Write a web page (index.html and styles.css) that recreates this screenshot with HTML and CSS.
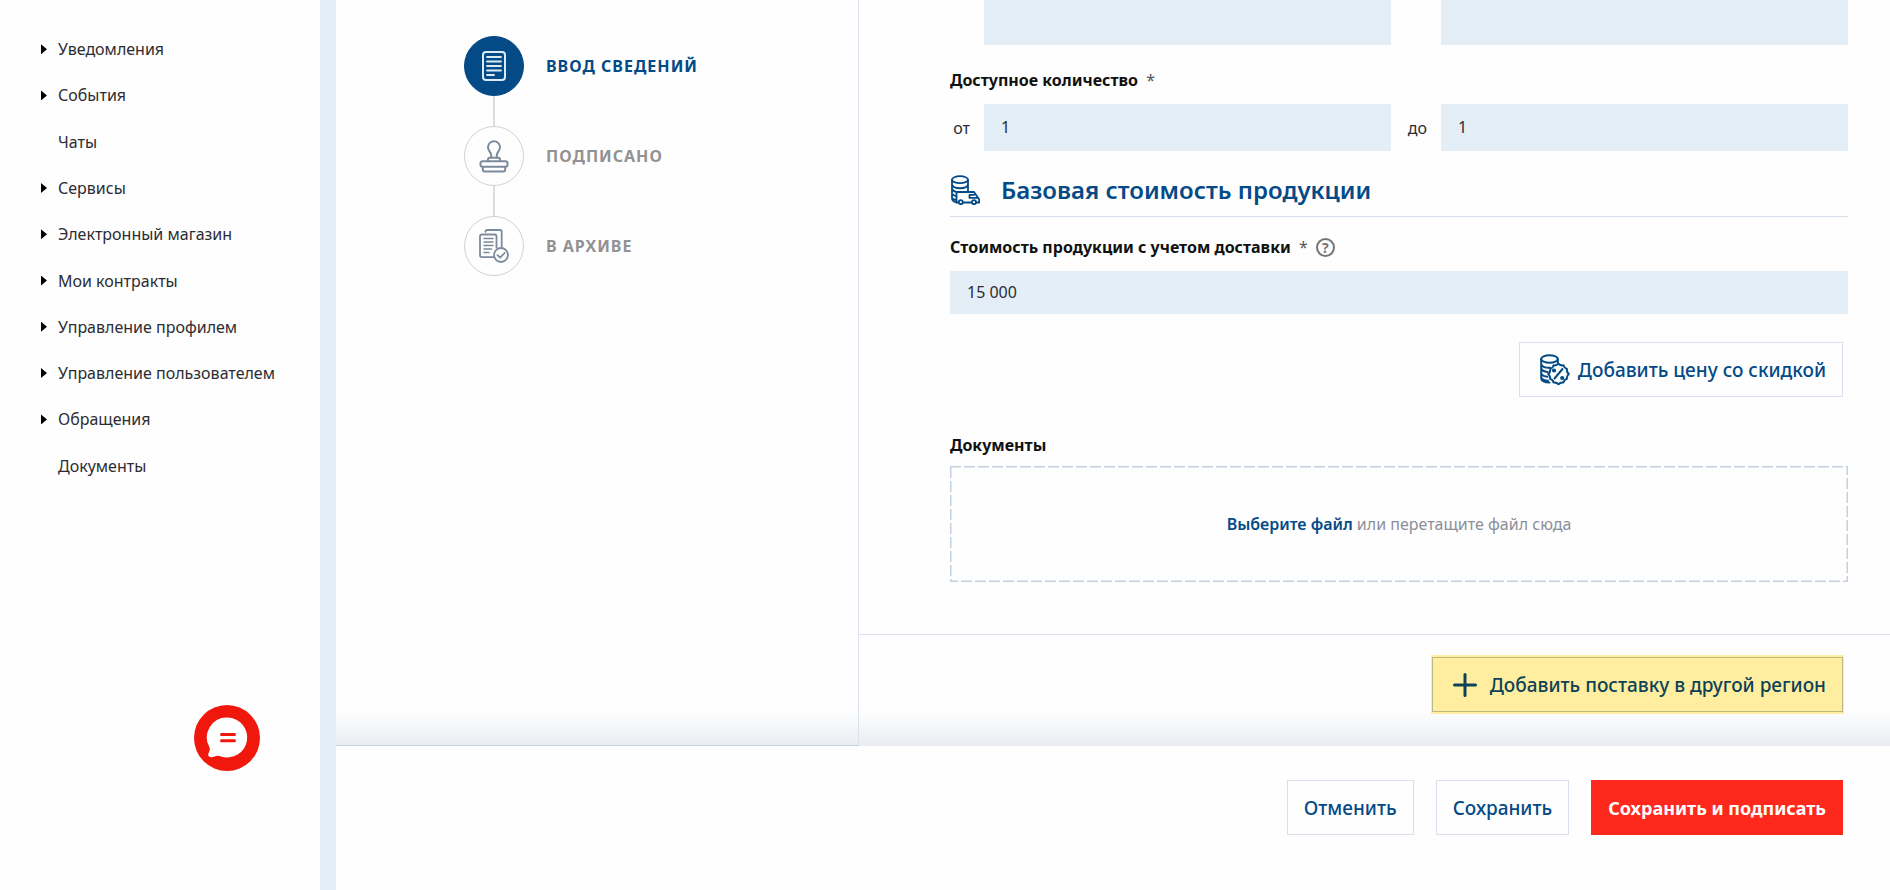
FILE: index.html
```html
<!DOCTYPE html>
<html lang="ru">
<head>
<meta charset="utf-8">
<meta name="viewport" content="width=device-width, initial-scale=1">
<title>Базовая стоимость продукции</title>
<link rel="stylesheet" href="styles.css">
</head>
<body>
<div class="page">
  <nav class="sidebar" aria-label="Меню">
    <ul class="menu">
      <li class="menu-item has-children"><a href="#">Уведомления</a></li>
      <li class="menu-item has-children"><a href="#">События</a></li>
      <li class="menu-item"><a href="#">Чаты</a></li>
      <li class="menu-item has-children"><a href="#">Сервисы</a></li>
      <li class="menu-item has-children"><a href="#">Электронный магазин</a></li>
      <li class="menu-item has-children"><a href="#">Мои контракты</a></li>
      <li class="menu-item has-children"><a href="#">Управление профилем</a></li>
      <li class="menu-item has-children"><a href="#">Управление пользователем</a></li>
      <li class="menu-item has-children"><a href="#">Обращения</a></li>
      <li class="menu-item"><a href="#">Документы</a></li>
    </ul>
  </nav>

  <main class="main">
    <div class="work">
      <section class="steps-panel">
        <ol class="steps">
          <li class="step step-active">
            <span class="step-icon">
              <svg width="24" height="30" viewBox="0 0 24 30" fill="none" stroke="#dcebf8" stroke-width="2" stroke-linecap="round">
                <rect x="1" y="1" width="22" height="28" rx="3"/>
                <path d="M5 6h14M5 10.500h14M5 15h14M5 19.500h14M5 24h7" stroke-width="1.800"/>
              </svg>
            </span>
            <span class="step-name">ВВОД СВЕДЕНИЙ</span>
          </li>
          <li class="step">
            <span class="step-icon">
              <svg width="30" height="34" viewBox="0 0 30 34" fill="none" stroke="#7c8b9b" stroke-width="2" stroke-linejoin="round" stroke-linecap="round">
                <path d="M12 18.500c1-3.200-.3-4.700-1.600-6.400a6 6 0 1 1 9.200 0c-1.300 1.700-2.600 3.200-1.600 6.400"/>
                <path d="M9 22v-1.500q0-1.800 1.800-1.800h8.400q1.800 0 1.800 1.800v1.500"/>
                <rect x="1.500" y="22.200" width="27" height="5.600" rx="2"/>
                <path d="M3.800 28v2.500q0 2 2 2h18.400q2 0 2-2v-2.500"/>
              </svg>
            </span>
            <span class="step-name">ПОДПИСАНО</span>
          </li>
          <li class="step">
            <span class="step-icon">
              <svg width="30" height="34" viewBox="0 0 30 34" fill="none" stroke="#7c8b9b" stroke-width="1.800" stroke-linejoin="round" stroke-linecap="round">
                <path d="M6.500 2.800V2.400Q6.500 1 8 1h13q1.700 0 1.700 1.700v15"/>
                <path d="M14.500 28.200H3q-2 0-2-2V7.500q0-2 2-2h12.500q2 0 2 2v11.200"/>
                <path d="M5 9.500h9M5 13h9M5 16.500h9M5 20h7.500M5 23.500h5" stroke-width="1.600"/>
                <circle cx="22" cy="26" r="7"/>
                <path d="M18.500 26.200l2.600 2.500 4.500-4.700"/>
              </svg>
            </span>
            <span class="step-name">В АРХИВЕ</span>
          </li>
        </ol>
      </section>

      <section class="form-panel">
        <form class="form" id="offer">
          <div class="range range-top">
            <span class="range-label"></span>
            <input class="field field-clipped" type="text" aria-label="Срок от">
            <span class="range-label"></span>
            <input class="field field-clipped" type="text" aria-label="Срок до">
          </div>

          <div class="label">Доступное количество <span class="required">*</span></div>
          <div class="range">
            <label class="range-label" for="qty-from">от</label>
            <input class="field" id="qty-from" type="text" value="1">
            <label class="range-label" for="qty-to">до</label>
            <input class="field" id="qty-to" type="text" value="1">
          </div>

          <h2 class="heading">
            <svg width="30" height="30" viewBox="0 0 30 30" fill="none" stroke="#044a86" stroke-width="1.800" stroke-linejoin="round" stroke-linecap="round">
              <ellipse cx="10" cy="4.700" rx="8" ry="3.500"/>
              <path d="M2 4.700v18.500q0 3 4.300 4.300M18 4.700v11M2 9.500c1 5 15 5 16 0M2 14c.8 1.600 2.300 2.400 4.300 2.800M2 18.700c.8 1.400 2 2 4.300 2.500M2 23c.8 1 2 1.600 4.300 2"/>
              <path d="M8.500 27.500h-2V17h17.500l4.200 6 1 1.500v3h-3M13 27.500h9M24 19.800h-4.500v3h7.500"/>
              <circle cx="10.800" cy="27.200" r="2"/><circle cx="24" cy="27.200" r="2"/>
            </svg>
            <span>Базовая стоимость продукции</span>
          </h2>

          <div class="label-row">
            <label class="label" for="price">Стоимость продукции с учетом доставки <span class="required">*</span></label>
            <button class="help" type="button" aria-label="Подсказка">?</button>
          </div>
          <input class="field field-price" id="price" type="text" value="15 000">

          <div class="actions">
            <button class="btn btn-discount" type="button">
              <svg width="30" height="32" viewBox="0 0 30 32" fill="none" stroke="#044a86" stroke-width="2" stroke-linejoin="round" stroke-linecap="round">
                <ellipse cx="9.500" cy="5" rx="8.300" ry="3.800"/>
                <path d="M1.200 5v19.500c.6 2.800 4 4 8.300 4M17.800 5v4M1.200 10c1 3 5 4 8.800 3.800M1.200 14.800c1 2 3.600 3 6.300 3.200M1.200 19.600c1 2 3.600 3 6.300 3.200M1.200 24c1 2 4 2.600 6.800 2.800"/>
                <path d="M18.500 9.700q2.200 2.300 5 1.600.8 2.900 3.400 3.600-.5 2.900 1.900 5-2.300 2-1.900 5-2.700.7-3.500 3.600-2.900-.6-4.900 1.800-2-2.400-4.900-1.800-.8-2.900-3.500-3.600.5-3-1.800-5 2.400-2.100 1.900-5 2.600-.7 3.400-3.600 2.800.7 4.900-1.600z"/>
                <path d="M22.500 15l-8 9.500"/>
                <circle cx="14" cy="16.500" r="1.100" fill="#044a86"/><circle cx="22.200" cy="24" r="1.100" fill="#044a86"/>
              </svg>
              <span>Добавить цену со скидкой</span>
            </button>
          </div>

          <div class="label">Документы</div>
          <div class="dropzone">
            <svg class="dropzone-frame" aria-hidden="true"><rect x="0" y="0" width="100%" height="100%"/></svg>
            <p><a class="pick" href="#">Выберите файл</a> или перетащите файл сюда</p>
          </div>
        </form>

        <div class="region-row">
          <button class="btn btn-region" type="button">
            <svg width="24" height="24" viewBox="0 0 24 24" stroke="#0d4257" stroke-width="3" stroke-linecap="round"><path d="M12 1.500v21M1.500 12h21"/></svg>
            <span>Добавить поставку в другой регион</span>
          </button>
        </div>
      </section>
    </div>

    <footer class="footer">
      <button class="btn" type="button">Отменить</button>
      <button class="btn" type="button">Сохранить</button>
      <button class="btn btn-primary" type="submit" form="offer">Сохранить и подписать</button>
    </footer>
  </main>
</div>

<button class="chat" type="button" aria-label="Открыть чат">
  <svg width="66" height="66" viewBox="0 0 66 66">
    <circle cx="33" cy="33" r="33" fill="#f0180d"/>
    <path d="M33.500 12.500a20 20 0 1 1-6.500 39c-2-.9-4.300-.9-6.500.1-3 1-6.500.8-6.300-1.800.2-2.500 2.500-4.500 1.300-7.300A20 20 0 0 1 33.500 12.500z" fill="#fff"/>
    <path d="M27.500 29.500h13M27.500 35.800h13" stroke="#f0180d" stroke-width="3" stroke-linecap="round"/>
  </svg>
</button>
</body>
</html>
```
FILE: styles.css
```css
* {
  box-sizing: border-box;
}

body {
  margin: 0;
  background: #fefefe;
  color: #2c2c33;
  font: 16px/24px "Noto Sans", "Open Sans", sans-serif;
}

button,
input {
  font: inherit;
  color: inherit;
}

.page {
  display: flex;
  min-height: 100vh;
}

/* Sidebar */
.sidebar {
  flex: 0 0 336px;
  border-right: 16px solid #e4eef7;
  padding: 26px 16px 24px 41px;
}

.menu {
  display: grid;
  grid-auto-rows: 1fr;
  min-height: 52vh;
  margin: 0;
  padding: 0;
  list-style: none;
}

.menu-item {
  display: flex;
  align-items: center;
  padding-left: 17px;
}

.has-children {
  padding-left: 0;
}

.has-children::before {
  content: "";
  width: 6px;
  height: 10px;
  margin-right: 11px;
  background: #000;
  clip-path: polygon(0 0, 100% 50%, 0 100%);
}

.menu-item a {
  color: inherit;
  text-decoration: none;
}

/* Work area */
.main {
  flex: 1;
  display: flex;
  flex-direction: column;
  min-width: 0;
}

.work {
  flex: 1;
  display: flex;
  background: linear-gradient(to top, #e9edf2, #fefefe 36px);
}

.steps-panel {
  flex: 0 0 523px;
  border-right: 1px solid #dbe2ee;
  border-bottom: 1px solid #c6d1e0;
  padding: 36px 24px 24px 128px;
}

.steps {
  display: flex;
  flex-direction: column;
  gap: 30px;
  margin: 0;
  padding: 0;
  list-style: none;
}

.step {
  position: relative;
  display: flex;
  align-items: center;
  gap: 22px;
  color: #929292;
}

.step-icon {
  display: flex;
  align-items: center;
  justify-content: center;
  width: 60px;
  height: 60px;
  border: 1px solid #d2d2d2;
  border-radius: 50%;
}

.step + .step::before {
  content: "";
  position: absolute;
  bottom: 100%;
  left: 29px;
  width: 2px;
  height: 30px;
  background: #dcdcdc;
}

.step-name {
  font-weight: 700;
  letter-spacing: 1px;
}

.step-active {
  color: #044a86;
}

.step-active .step-icon {
  border-color: #044a86;
  background: #044a86;
}

/* Form */
.form-panel {
  flex: 1;
  display: flex;
  flex-direction: column;
  min-width: 0;
}

.form {
  flex: 1;
  padding: 0 42px 0 91px;
}

.range {
  display: grid;
  grid-template-columns: 34px 1fr 50px 1fr;
  align-items: center;
}

.range-top {
  margin-bottom: 23px;
}

.range-label {
  padding-right: 14px;
  text-align: right;
}

.field {
  width: 100%;
  height: 47px;
  border: 0;
  border-radius: 0;
  padding: 0 17px 2px;
  background: #e4eef7;
}

.field-clipped {
  height: 45px;
}

.field-price {
  display: block;
  height: 43px;
}

.label {
  display: block;
  color: #111;
  font-weight: 700;
}

.label + .range {
  margin-top: 12px;
}

.required {
  margin-left: 4px;
  color: #555;
  font-weight: 400;
}

.heading {
  display: flex;
  align-items: center;
  gap: 21px;
  margin: 19px 0 18px;
  border-bottom: 1px solid #d5dfed;
  padding-bottom: 6px;
  color: #044a86;
  font-size: 24px;
  font-weight: 600;
  line-height: 40px;
}

.label-row {
  display: flex;
  align-items: center;
  gap: 8px;
  margin-bottom: 12px;
}

.help {
  width: 19px;
  height: 19px;
  border: 2px solid #757575;
  border-radius: 50%;
  padding: 0;
  background: none;
  color: #757575;
  font-size: 14px;
  font-weight: 700;
  line-height: 15px;
}

.actions {
  display: flex;
  justify-content: flex-end;
  margin: 28px 5px 36px;
}

.btn {
  display: flex;
  align-items: center;
  height: 55px;
  border: 1px solid #d7e0ec;
  border-radius: 0;
  padding: 0 16px;
  background: #fefefe;
  color: #044a86;
  font-size: 19px;
  font-weight: 500;
  white-space: nowrap;
}

.btn-discount {
  gap: 8px;
  padding-left: 20px;
}

.dropzone {
  display: flex;
  align-items: center;
  justify-content: center;
  position: relative;
  min-height: 116px;
  margin: 9px 0 51px;
  color: #8b8f99;
}

.dropzone-frame {
  position: absolute;
  inset: 0;
  width: 100%;
  height: 100%;
  fill: none;
  stroke: #c3d0e0;
  stroke-width: 3;
  stroke-dasharray: 11 3;
  pointer-events: none;
}

.dropzone p {
  margin: 0;
}

.pick {
  color: #044a86;
  font-weight: 600;
  text-decoration: none;
}

.region-row {
  display: flex;
  justify-content: flex-end;
  border-top: 1px solid #dbe2ee;
  padding: 22px 47px 34px;
}

.btn-region {
  gap: 13px;
  border-color: #bdb782;
  padding-left: 20px;
  background: #ffeea0;
  color: #0d4257;
  box-shadow: 0 1px 0 1px #ffeea0, 0 -1px 0 1px #ffeea0;
}

/* Footer */
.footer {
  display: flex;
  align-items: flex-start;
  justify-content: flex-end;
  gap: 22px;
  min-height: 144px;
  padding: 34px 47px;
}

.btn-primary {
  border-color: #ff281c;
  background: #ff281c;
  color: #fff;
  font-size: 18px;
  font-weight: 700;
}

.chat {
  position: fixed;
  bottom: 119px;
  left: 194px;
  width: 66px;
  height: 66px;
  border: 0;
  border-radius: 50%;
  padding: 0;
  background: none;
}

.chat svg {
  display: block;
}
```
